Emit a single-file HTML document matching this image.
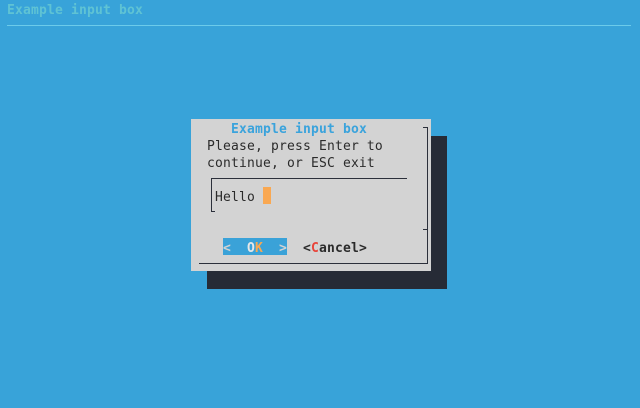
<!DOCTYPE html>
<html><head><style>
body{margin:0;width:640px;height:408px;background:#38a3d9;position:relative;overflow:hidden;font-family:"DejaVu Sans Mono","Liberation Mono",monospace;font-size:13px;letter-spacing:0.17px}
.t{position:absolute;white-space:pre;line-height:17px;height:17px;margin-top:2px}
.d{position:absolute;background:#2b2f3a}
</style></head><body>
<div class="t" style="left:7px;top:0px;color:#5fc3d4;font-weight:bold">Example input box</div>
<div style="position:absolute;left:7px;top:25px;width:624px;height:1px;background:#6ccbea"></div>
<div style="position:absolute;left:207px;top:136px;width:240px;height:153px;background:#262b36"></div>
<div style="position:absolute;left:191px;top:119px;width:240px;height:152px;background:#d3d3d3"></div>
<div class="t" style="left:231px;top:119px;color:#3aa3dc;font-weight:bold">Example input box</div>
<div class="t" style="left:207px;top:136px;color:#2b2b2b">Please, press Enter to</div>
<div class="t" style="left:207px;top:153px;color:#2b2b2b">continue, or ESC exit</div>
<div class="d" style="left:427px;top:127px;width:1px;height:137px"></div>
<div class="d" style="left:423px;top:127px;width:4px;height:1px"></div>
<div class="d" style="left:423px;top:229px;width:4px;height:1px"></div>
<div class="d" style="left:199px;top:263px;width:229px;height:1px"></div>
<div class="d" style="left:211px;top:178px;width:196px;height:1px"></div>
<div class="d" style="left:211px;top:178px;width:1px;height:34px"></div>
<div class="d" style="left:211px;top:211px;width:4px;height:1px"></div>
<div class="t" style="left:215px;top:187px;color:#2b2b2b">Hello</div>
<div style="position:absolute;left:263px;top:187px;width:8px;height:17px;background:#f9a852"></div>
<div style="position:absolute;left:223px;top:238px;width:64px;height:17px;background:#3aa2d8"></div>
<div class="t" style="left:223px;top:238px;color:#d3d3d3;font-weight:bold">&lt;  <span style="color:#e8e8e8">O</span><span style="color:#f9a852">K</span>  &gt;</div>
<div class="t" style="left:303px;top:238px;color:#2b2b2b;font-weight:bold">&lt;<span style="color:#e8443a">C</span>ancel&gt;</div>
</body></html>
